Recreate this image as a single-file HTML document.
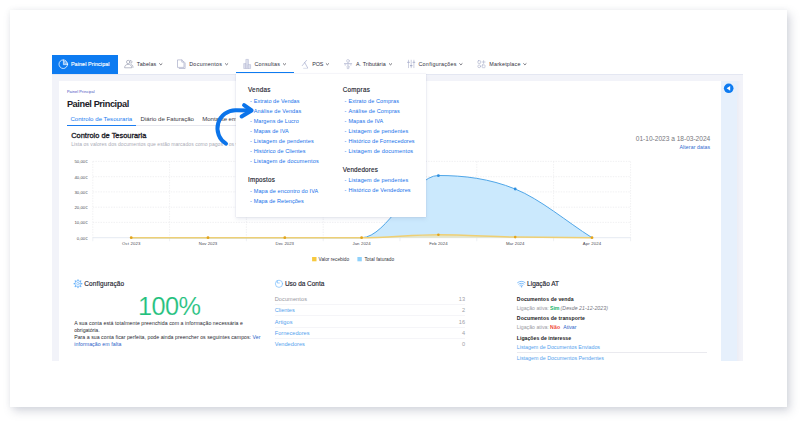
<!DOCTYPE html>
<html lang="pt">
<head>
<meta charset="utf-8">
<title>Painel Principal</title>
<style>
*{box-sizing:border-box;margin:0;padding:0}
html,body{width:800px;height:421px;overflow:hidden;background:#fff}
body{font-family:"Liberation Sans",sans-serif;position:relative;color:#1d1d2b}
.card{position:absolute;left:10px;top:10px;width:777px;height:397px;background:#fff;box-shadow:3px 4px 9px rgba(115,124,145,.30),0 0 5px rgba(115,124,145,.08)}
.abs{position:absolute;white-space:nowrap;line-height:1;z-index:3}
.gray{position:absolute;left:52px;top:74px;width:691.4px;height:287px;background:#f2f3f9;border-top:1px solid #e4e7f2;overflow:hidden}
.panel{position:absolute;left:59px;top:80.5px;width:662px;height:280.5px;background:#fff}
.side{position:absolute;left:721px;top:80.5px;width:16px;height:280.5px;background:#e6f0fc}
.strip{position:absolute;left:737px;top:80.5px;width:3.5px;height:280.5px;background:linear-gradient(to right,#ecedf5,#f2f3f9)}
.navbtn{position:absolute;left:52px;top:55px;width:65.5px;height:19px;background:#0d7bf1}
.dd{z-index:2;position:absolute;left:236px;top:74px;width:190.2px;height:143.3px;background:#fff;box-shadow:0 1.5px 4px rgba(120,130,170,.16),0 0 1px rgba(120,130,170,.35)}
.ln{position:absolute;height:0;border-top:0.7px solid #f5f5f8}
</style>
</head>
<body>
<div class="card"></div>
<div class="gray"></div>
<div class="panel"></div>
<div class="side"></div>
<div class="strip"></div>
<div class="navbtn"></div>
<div class="ln" style="left:67px;top:125.2px;width:170px;border-top:0.8px solid #e6e7ee"></div>
<div class="ln" style="left:66.9px;top:124.9px;width:69px;border-top:1.1px solid #1a7cf0"></div>
<div class="ln" style="left:274.7px;top:303.9px;width:190.5px"></div>
<div class="ln" style="left:274.7px;top:315.1px;width:190.5px"></div>
<div class="ln" style="left:274.7px;top:326.5px;width:190.5px"></div>
<div class="ln" style="left:274.7px;top:337.8px;width:190.5px"></div>
<div class="ln" style="left:516.8px;top:352.3px;width:190.5px;border-top-color:#eaeaef"></div>
<svg class="abs" style="left:0;top:0;z-index:1" width="800" height="421" viewBox="0 0 800 421" fill="none">
<!-- chart grid -->
<g stroke="#e5e5e9" stroke-width="0.6" stroke-dasharray="1.4 1.2">
<path d="M92.8 161.4H630.6M92.8 176.7H630.6M92.8 191.9H630.6M92.8 207.2H630.6M92.8 222.4H630.6"/>
<path d="M92.8 161.4V237.7M169.6 161.4V237.7M246.4 161.4V237.7M323.2 161.4V237.7M400 161.4V237.7M476.8 161.4V237.7M553.6 161.4V237.7M630.6 161.4V237.7"/>
</g>
<path d="M92.8 237.7H630.6" stroke="#dde4ee" stroke-width="0.8"/>
<path d="M92.8 237.7V241.2M169.6 237.7V241.2M246.4 237.7V241.2M323.2 237.7V241.2M400 237.7V241.2M476.8 237.7V241.2M553.6 237.7V241.2M630.6 237.7V241.2" stroke="#e3e6ec" stroke-width="0.6"/>
<!-- blue area -->
<path d="M131.2 237.7H361.6C387.2 237.7 412.8 175.5 438.4 175.5C464 175.5 489.6 178.6 515.2 189C540.8 199.4 566.4 221.5 592 237.7Z" fill="#cbe9fd"/>
<path d="M131.2 237.7H361.6C387.2 237.7 412.8 175.5 438.4 175.5C464 175.5 489.6 178.6 515.2 189C540.8 199.4 566.4 221.5 592 237.7" stroke="#4fa6e8" stroke-width="1"/>
<!-- yellow -->
<path d="M131.2 237.7H361.6C387.2 237.7 412.8 234.7 438.4 234.7C464 234.7 489.6 236.6 515.2 237.1C540.8 237.5 566.4 237.7 592 237.7Z" fill="#f6e2a6" fill-opacity=".6"/>
<path d="M131.2 237.7H361.6C387.2 237.7 412.8 234.7 438.4 234.7C464 234.7 489.6 236.6 515.2 237.1C540.8 237.5 566.4 237.7 592 237.7" stroke="#eecf74" stroke-width="1.5"/>
<g fill="#2f8fe0"><circle cx="438.4" cy="175.7" r="1.4"/><circle cx="515.2" cy="189" r="1.4"/></g>
<g fill="#e2a41c"><circle cx="131.2" cy="237.7" r="1.4"/><circle cx="208" cy="237.7" r="1.4"/><circle cx="284.8" cy="237.7" r="1.4"/><circle cx="361.6" cy="237.7" r="1.4"/><circle cx="438.4" cy="234.7" r="1.3"/><circle cx="515.2" cy="237.1" r="1.3"/><circle cx="592" cy="237.7" r="1.4"/></g>
<rect x="312.1" y="257" width="4.4" height="4.3" fill="#f7c93e"/>
<rect x="357.4" y="257" width="4.4" height="4.3" fill="#8fd1fb"/>
</svg>

<div id="pre">
</div>
<div class="dd"></div>
<div class="ln" style="z-index:3;left:235.7px;top:72.4px;width:58.2px;border-top:1.6px solid #0d7bf1"></div>
<span class="abs" style="left:70.90px;top:62.34px;font-size:5.4px;color:#ffffff;letter-spacing:0.100px;-webkit-text-stroke:0.14px #ffffff;">Painel Principal</span>
<span class="abs" style="left:136.80px;top:62.34px;font-size:5.4px;color:#30303c;letter-spacing:0.139px;">Tabelas</span>
<span class="abs" style="left:189.20px;top:62.34px;font-size:5.4px;color:#30303c;letter-spacing:0.288px;">Documentos</span>
<span class="abs" style="left:254.50px;top:62.34px;font-size:5.4px;color:#30303c;letter-spacing:0.178px;">Consultas</span>
<span class="abs" style="left:312.30px;top:62.34px;font-size:5.4px;color:#30303c;letter-spacing:-0.196px;">POS</span>
<span class="abs" style="left:356.00px;top:62.34px;font-size:5.4px;color:#30303c;letter-spacing:0.051px;">A. Tributária</span>
<span class="abs" style="left:418.40px;top:62.34px;font-size:5.4px;color:#30303c;letter-spacing:0.283px;">Configurações</span>
<span class="abs" style="left:489.30px;top:62.34px;font-size:5.4px;color:#30303c;letter-spacing:0.174px;">Marketplace</span>
<span class="abs" style="left:66.90px;top:90.99px;font-size:3.8px;color:#3f4bbd;letter-spacing:0.105px;">Painel Principal</span>
<span class="abs" style="left:66.90px;top:100.12px;font-size:9.2px;color:#1c1c28;font-weight:bold;letter-spacing:-0.408px;">Painel Principal</span>
<span class="abs" style="left:70.40px;top:116.17px;font-size:6.1px;color:#1a7cf0;letter-spacing:0.012px;">Controlo de Tesouraria</span>
<span class="abs" style="left:140.50px;top:116.17px;font-size:6.1px;color:#3a3a46;letter-spacing:-0.002px;">Diário de Faturação</span>
<span class="abs" style="left:202.30px;top:116.17px;font-size:6.1px;color:#3a3a46;letter-spacing:-0.087px;z-index:1;">Montante em dívida</span>
<span class="abs" style="left:71.20px;top:132.28px;font-size:7.4px;color:#1c1c28;letter-spacing:0.026px;-webkit-text-stroke:0.32px #1c1c28;">Controlo de Tesouraria</span>
<span class="abs" style="left:71.20px;top:142.35px;font-size:5.0px;color:#a9abb5;letter-spacing:0.06px;z-index:1;">Lista os valores dos documentos que estão marcados como pagos e os valores faturados no período.</span>
<span class="abs" style="left:635.75px;top:136.10px;font-size:6.6px;color:#77777d;letter-spacing:-0.013px;">01-10-2023 a 18-03-2024</span>
<span class="abs" style="left:679.50px;top:144.84px;font-size:5.2px;color:#2f6bd0;letter-spacing:0.106px;">Alterar datas</span>
<span class="abs" style="left:248.00px;top:86.91px;font-size:6.3px;color:#23232f;letter-spacing:0.270px;-webkit-text-stroke:0.14px #23232f;">Vendas</span>
<span class="abs" style="left:248.00px;top:177.16px;font-size:6.3px;color:#23232f;letter-spacing:0.192px;-webkit-text-stroke:0.14px #23232f;">Impostos</span>
<span class="abs" style="left:342.80px;top:86.91px;font-size:6.3px;color:#23232f;letter-spacing:0.239px;-webkit-text-stroke:0.14px #23232f;">Compras</span>
<span class="abs" style="left:342.80px;top:166.91px;font-size:6.3px;color:#23232f;letter-spacing:0.155px;-webkit-text-stroke:0.14px #23232f;">Vendedores</span>
<span class="abs" style="left:250.00px;top:98.58px;font-size:5.5px;color:#1470ea;">-</span>
<span class="abs" style="left:253.75px;top:98.58px;font-size:5.5px;color:#1470ea;letter-spacing:0.048px;">Extrato de Vendas</span>
<span class="abs" style="left:250.00px;top:108.83px;font-size:5.5px;color:#1470ea;">-</span>
<span class="abs" style="left:253.75px;top:108.83px;font-size:5.5px;color:#1470ea;letter-spacing:0.116px;">Análise de Vendas</span>
<span class="abs" style="left:250.00px;top:118.83px;font-size:5.5px;color:#1470ea;">-</span>
<span class="abs" style="left:253.75px;top:118.83px;font-size:5.5px;color:#1470ea;letter-spacing:0.042px;">Margens de Lucro</span>
<span class="abs" style="left:250.00px;top:128.59px;font-size:5.5px;color:#1470ea;">-</span>
<span class="abs" style="left:253.75px;top:128.59px;font-size:5.5px;color:#1470ea;letter-spacing:0.075px;">Mapas de IVA</span>
<span class="abs" style="left:250.00px;top:138.84px;font-size:5.5px;color:#1470ea;">-</span>
<span class="abs" style="left:253.75px;top:138.84px;font-size:5.5px;color:#1470ea;letter-spacing:0.137px;">Listagem de pendentes</span>
<span class="abs" style="left:250.00px;top:148.84px;font-size:5.5px;color:#1470ea;">-</span>
<span class="abs" style="left:253.75px;top:148.84px;font-size:5.5px;color:#1470ea;letter-spacing:0.064px;">Histórico de Clientes</span>
<span class="abs" style="left:250.00px;top:158.84px;font-size:5.5px;color:#1470ea;">-</span>
<span class="abs" style="left:253.75px;top:158.84px;font-size:5.5px;color:#1470ea;letter-spacing:0.164px;">Listagem de documentos</span>
<span class="abs" style="left:250.00px;top:188.78px;font-size:5.5px;color:#1470ea;">-</span>
<span class="abs" style="left:253.75px;top:188.78px;font-size:5.5px;color:#1470ea;letter-spacing:0.113px;">Mapa de encontro do IVA</span>
<span class="abs" style="left:250.00px;top:198.99px;font-size:5.5px;color:#1470ea;">-</span>
<span class="abs" style="left:253.75px;top:198.99px;font-size:5.5px;color:#1470ea;letter-spacing:0.046px;">Mapa de Retenções</span>
<span class="abs" style="left:344.60px;top:98.58px;font-size:5.5px;color:#1470ea;">-</span>
<span class="abs" style="left:348.40px;top:98.58px;font-size:5.5px;color:#1470ea;letter-spacing:0.096px;">Extrato de Compras</span>
<span class="abs" style="left:344.60px;top:108.83px;font-size:5.5px;color:#1470ea;">-</span>
<span class="abs" style="left:348.40px;top:108.83px;font-size:5.5px;color:#1470ea;letter-spacing:0.107px;">Análise de Compras</span>
<span class="abs" style="left:344.60px;top:118.83px;font-size:5.5px;color:#1470ea;">-</span>
<span class="abs" style="left:348.40px;top:118.83px;font-size:5.5px;color:#1470ea;letter-spacing:0.066px;">Mapas de IVA</span>
<span class="abs" style="left:344.60px;top:128.59px;font-size:5.5px;color:#1470ea;">-</span>
<span class="abs" style="left:348.40px;top:128.59px;font-size:5.5px;color:#1470ea;letter-spacing:0.132px;">Listagem de pendentes</span>
<span class="abs" style="left:344.60px;top:138.84px;font-size:5.5px;color:#1470ea;">-</span>
<span class="abs" style="left:348.40px;top:138.84px;font-size:5.5px;color:#1470ea;letter-spacing:0.069px;">Histórico de Fornecedores</span>
<span class="abs" style="left:344.60px;top:148.84px;font-size:5.5px;color:#1470ea;">-</span>
<span class="abs" style="left:348.40px;top:148.84px;font-size:5.5px;color:#1470ea;letter-spacing:0.155px;">Listagem de documentos</span>
<span class="abs" style="left:344.60px;top:177.99px;font-size:5.5px;color:#1470ea;">-</span>
<span class="abs" style="left:348.40px;top:177.99px;font-size:5.5px;color:#1470ea;letter-spacing:0.132px;">Listagem de pendentes</span>
<span class="abs" style="left:344.60px;top:188.09px;font-size:5.5px;color:#1470ea;">-</span>
<span class="abs" style="left:348.40px;top:188.09px;font-size:5.5px;color:#1470ea;letter-spacing:0.101px;">Histórico de Vendedores</span>
<span class="abs" style="right:712.40px;top:160.22px;font-size:4.3px;color:#4a4a52;">50,00€</span>
<span class="abs" style="right:712.40px;top:175.52px;font-size:4.3px;color:#4a4a52;">40,00€</span>
<span class="abs" style="right:712.40px;top:190.72px;font-size:4.3px;color:#4a4a52;">30,00€</span>
<span class="abs" style="right:712.40px;top:206.02px;font-size:4.3px;color:#4a4a52;">20,00€</span>
<span class="abs" style="right:712.40px;top:221.22px;font-size:4.3px;color:#4a4a52;">10,00€</span>
<span class="abs" style="right:712.40px;top:236.52px;font-size:4.3px;color:#4a4a52;">0,00€</span>
<span class="abs" style="left:122.00px;top:242.42px;font-size:4.3px;color:#4a4a52;letter-spacing:0.128px;">Oct 2023</span>
<span class="abs" style="left:198.80px;top:242.42px;font-size:4.3px;color:#4a4a52;letter-spacing:-0.001px;">Nov 2023</span>
<span class="abs" style="left:275.60px;top:242.42px;font-size:4.3px;color:#4a4a52;letter-spacing:-0.001px;">Dec 2023</span>
<span class="abs" style="left:352.40px;top:242.42px;font-size:4.3px;color:#4a4a52;letter-spacing:0.095px;">Jan 2024</span>
<span class="abs" style="left:429.20px;top:242.42px;font-size:4.3px;color:#4a4a52;letter-spacing:0.030px;">Feb 2024</span>
<span class="abs" style="left:506.00px;top:242.42px;font-size:4.3px;color:#4a4a52;letter-spacing:0.032px;">Mar 2024</span>
<span class="abs" style="left:582.80px;top:242.42px;font-size:4.3px;color:#4a4a52;letter-spacing:0.126px;">Apr 2024</span>
<span class="abs" style="left:318.60px;top:258.26px;font-size:4.8px;color:#33333a;letter-spacing:-0.006px;">Valor recebido</span>
<span class="abs" style="left:364.40px;top:258.26px;font-size:4.8px;color:#33333a;letter-spacing:0.053px;">Total faturado</span>
<span class="abs" style="left:84.20px;top:280.56px;font-size:6.5px;color:#23232f;letter-spacing:0.115px;-webkit-text-stroke:0.14px #23232f;">Configuração</span>
<span class="abs" style="left:138.00px;top:294.39px;font-size:25.3px;color:#22c07c;letter-spacing:-0.572px;-webkit-text-stroke:0.2px #fff;">100%</span>
<span class="abs" style="left:74.20px;top:320.94px;font-size:5.2px;color:#2b2b33;letter-spacing:0.061px;">A sua conta está totalmente preenchida com a informação necessária e</span>
<span class="abs" style="left:74.20px;top:328.24px;font-size:5.2px;color:#2b2b33;letter-spacing:-0.05px;">obrigatória.</span>
<span class="abs" style="left:74.20px;top:334.94px;font-size:5.2px;color:#2b2b33;letter-spacing:0.037px;">Para a sua conta ficar perfeita, pode ainda preencher os seguintes campos: <span style="color:#2a62c8">Ver</span></span>
<span class="abs" style="left:74.20px;top:342.24px;font-size:5.2px;color:#2a62c8;letter-spacing:0.089px;">informação em falta</span>
<span class="abs" style="left:284.90px;top:280.56px;font-size:6.5px;color:#23232f;letter-spacing:-0.030px;-webkit-text-stroke:0.14px #23232f;">Uso da Conta</span>
<span class="abs" style="left:274.70px;top:296.93px;font-size:5.6px;color:#97979d;letter-spacing:0.094px;">Documentos</span>
<span class="abs" style="right:335.00px;top:296.93px;font-size:5.6px;color:#a0a0a6;">13</span>
<span class="abs" style="left:274.70px;top:308.23px;font-size:5.6px;color:#559fee;letter-spacing:-0.029px;">Clientes</span>
<span class="abs" style="right:335.00px;top:308.23px;font-size:5.6px;color:#a0a0a6;">2</span>
<span class="abs" style="left:274.70px;top:319.53px;font-size:5.6px;color:#559fee;letter-spacing:0.074px;">Artigos</span>
<span class="abs" style="right:335.00px;top:319.53px;font-size:5.6px;color:#a0a0a6;">16</span>
<span class="abs" style="left:274.70px;top:330.83px;font-size:5.6px;color:#559fee;letter-spacing:0.033px;">Fornecedores</span>
<span class="abs" style="right:335.00px;top:330.83px;font-size:5.6px;color:#a0a0a6;">4</span>
<span class="abs" style="left:274.70px;top:341.83px;font-size:5.6px;color:#559fee;letter-spacing:0.036px;">Vendedores</span>
<span class="abs" style="right:335.00px;top:341.83px;font-size:5.6px;color:#a0a0a6;">0</span>
<span class="abs" style="left:527.10px;top:280.56px;font-size:6.5px;color:#23232f;letter-spacing:-0.005px;-webkit-text-stroke:0.14px #23232f;">Ligação AT</span>
<span class="abs" style="left:516.80px;top:297.04px;font-size:5.2px;color:#1c1c24;font-weight:bold;letter-spacing:0.089px;">Documentos de venda</span>
<span class="abs" style="left:516.80px;top:305.84px;font-size:5.2px;color:#9a9aa2;letter-spacing:-0.001px;">Ligação ativa:</span>
<span class="abs" style="left:550.10px;top:305.84px;font-size:5.2px;color:#19b36b;font-weight:bold;letter-spacing:-0.126px;">Sim</span>
<span class="abs" style="left:560.60px;top:305.84px;font-size:5.2px;color:#77777f;font-style:italic;letter-spacing:0.049px;">(Desde 21-12-2023)</span>
<span class="abs" style="left:516.80px;top:315.74px;font-size:5.2px;color:#1c1c24;font-weight:bold;letter-spacing:0.093px;">Documentos de transporte</span>
<span class="abs" style="left:516.80px;top:325.14px;font-size:5.2px;color:#9a9aa2;letter-spacing:-0.001px;">Ligação ativa:</span>
<span class="abs" style="left:550.10px;top:325.14px;font-size:5.2px;color:#ef4a3c;font-weight:bold;letter-spacing:0.075px;">Não</span>
<span class="abs" style="left:563.30px;top:325.14px;font-size:5.2px;color:#2a62c8;letter-spacing:-0.030px;">Ativar</span>
<span class="abs" style="left:516.80px;top:335.94px;font-size:5.2px;color:#1c1c24;font-weight:bold;letter-spacing:0.004px;">Ligações de interesse</span>
<span class="abs" style="left:516.80px;top:344.79px;font-size:5.3px;color:#559fee;letter-spacing:-0.004px;">Listagem de Documentos Enviados</span>
<span class="abs" style="left:516.80px;top:356.09px;font-size:5.3px;color:#559fee;letter-spacing:0.010px;">Listagem de Documentos Pendentes</span>
<svg class="abs" style="left:0;top:0;z-index:3" width="800" height="421" viewBox="0 0 800 421" fill="none" stroke-linecap="round" stroke-linejoin="round">
<!-- painel icon -->
<g stroke="#fff" stroke-width="0.75">
<circle cx="63.3" cy="64.2" r="4.3"/>
<path d="M63.4 60V64.6H67.6"/>
<path d="M64.7 61.4A2.5 2.5 0 0 1 66.8 63.4H64.7Z" stroke-width="0.6"/>
</g>
<!-- tabelas: users -->
<g stroke="#8b90a6" stroke-width="0.6">
<circle cx="128.2" cy="62" r="1.7"/>
<path d="M124.6 67.4C124.6 65.4 126.2 64.4 128.2 64.4C130.2 64.4 131.8 65.4 131.8 67.4Z"/>
<path d="M130.2 60.4A1.6 1.6 0 0 1 130.9 63.5M131.6 64.6C132.6 65 133 66 133 67.4"/>
</g>
<!-- documentos -->
<g stroke="#9a9fc0" stroke-width="0.6">
<path d="M177.9 59.9H181.8L184 62.1V67.4H177.9Z" fill="#fff"/>
<path d="M181.8 59.9V62.1H184"/>
<path d="M179.2 68.5H185.1V63"/>
</g>
<!-- consultas: bars -->
<g stroke="#aeb3ce" stroke-width="0.5" fill="#dde0ee">
<rect x="244" y="63.6" width="2.2" height="4.9"/>
<rect x="246.2" y="59.4" width="2.2" height="9.1"/>
<rect x="248.4" y="64.6" width="2.2" height="3.9"/>
</g>
<!-- pos -->
<g stroke="#97a0c6" stroke-width="0.6">
<path d="M306.5 60.4L302.3 65.6M304.7 62.6L307.6 67.7"/><path d="M303.6 68.3H307.6" stroke="#c3c8de"/>
</g>
<!-- tributaria -->
<g stroke="#b4b9d2" stroke-width="0.6">
<circle cx="348" cy="60.9" r="1.4"/>
<path d="M344.4 63.7H351.7" stroke-width="0.9"/>
<path d="M345.2 64.4V65.3M350.9 64.4V65.3M348 62.4V65.6"/>
<circle cx="348" cy="66.9" r="1.1"/>
<path d="M347.2 68.6H348.8"/>
</g>
<!-- configuracoes: sliders -->
<g stroke="#a9afcb" stroke-width="0.6">
<path d="M408.5 60.2V67.7M411.2 60.2V67.7M413.9 60.2V67.7"/>
<path d="M407.7 62.2H409.3M410.4 65.6H412M413.1 62.2H414.7" stroke-width="1.1"/>
</g>
<!-- marketplace -->
<g stroke="#a3a8c6" stroke-width="0.55">
<rect x="477.9" y="60.7" width="2.7" height="2.7" rx="0.5"/>
<path d="M483.6 60.6V63.5M482.1 62H485.1"/>
<circle cx="479.2" cy="66.3" r="1.4"/>
<rect x="482.2" y="64.9" width="2.8" height="2.8" rx="0.5"/>
</g>
<!-- chevrons -->
<g stroke="#34343f" stroke-width="0.7">
<path d="M159.6 63.7L160.8 64.8L162.0 63.7"/>
<path d="M225.4 63.7L226.6 64.8L227.8 63.7"/>
<path d="M283.3 63.7L284.5 64.8L285.7 63.7"/>
<path d="M326.2 63.7L327.4 64.8L328.6 63.7"/>
<path d="M389.3 63.7L390.5 64.8L391.7 63.7"/>
<path d="M459.7 63.7L460.9 64.8L462.1 63.7"/>
<path d="M523.7 63.7L524.9 64.8L526.1 63.7"/>
</g>
<!-- section icons -->
<g stroke="#6bb3fa" stroke-width="0.6">
<circle cx="78" cy="283.7" r="3.1"/>
<circle cx="78" cy="283.7" r="1.3"/>
<path d="M78 279.8V280.6M78 286.8V287.6M74.1 283.7H74.9M81.1 283.7H81.9M75.2 280.9L75.8 281.5M80.2 285.9L80.8 286.5M75.2 286.5L75.8 285.9M80.2 281.5L80.8 280.9" stroke-width="1.2"/>
</g>
<g stroke="#5fb0fb" stroke-width="0.6">
<circle cx="279" cy="283.8" r="3.6"/>
<path d="M277.3 280.7V283H279.4"/>
</g>
<g stroke="#5aaaf8" stroke-width="0.75">
<path d="M517.6 282.6C519.6 280.9 523.1 280.9 525.1 282.6"/>
<path d="M518.7 284.1C520.1 283 522.6 283 524 284.1"/>
<path d="M519.9 285.5C520.7 284.9 522 284.9 522.8 285.5"/>
<circle cx="521.35" cy="286.8" r="0.45" fill="#5aaaf8" stroke-width="0.4"/>
</g>
</svg>
<svg class="abs" style="left:0;top:0;z-index:4" width="800" height="421" viewBox="0 0 800 421" fill="none">
<!-- arrow -->
<g stroke="#0b74ea" stroke-width="4" stroke-linecap="round" stroke-linejoin="round">
<path d="M226 143.6A18 18 0 0 1 236 110.3L250.5 110.5"/>
<path d="M244.1 105.2L251.6 110.5L241.6 116.5"/>
</g>
<!-- sidebar toggle -->
<circle cx="728.7" cy="88.3" r="4.8" fill="#0d7bf1"/>
<path d="M730.2 85.9V90.7L726.6 88.3Z" fill="#fff"/>
</svg>

</body>
</html>
